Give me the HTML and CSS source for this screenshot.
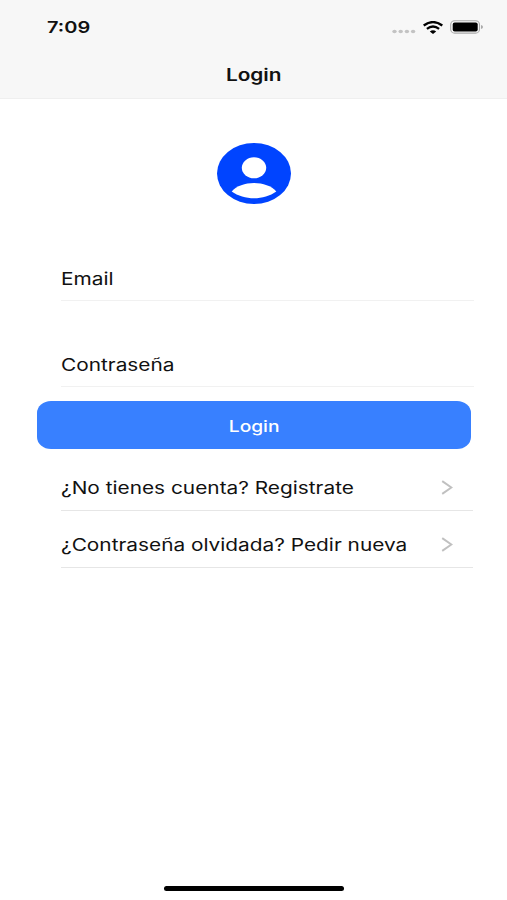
FILE: index.html
```
<!DOCTYPE html>
<html lang="es">
<head>
<meta charset="utf-8">
<title>Login</title>
<link rel="stylesheet" href="styles.css">
</head>
<body>
<header class="header">
  <div class="status">
    <span class="time"><span class="wide wide-time">7:09</span></span>
    <div class="indicators">
      <svg class="dots" width="24" height="5" viewBox="0 0 24 5" fill="#c3c3c3"><ellipse cx="2.5" cy="2.5" rx="2.2" ry="1.8"/><ellipse cx="8.7" cy="2.5" rx="2.2" ry="1.8"/><ellipse cx="14.9" cy="2.5" rx="2.2" ry="1.8"/><ellipse cx="21.1" cy="2.5" rx="2.2" ry="1.8"/></svg>
      <svg class="wifi" width="20" height="13" viewBox="0 0 20 13"><path d="M.7 4.5Q10-2.4 19.3 4.5M3.9 7.8Q10 3.2 16.1 7.8" fill="none" stroke="#000" stroke-width="2.3"/><path d="M6.8 10.4Q10 8 13.2 10.4L10 13Z"/></svg>
      <svg class="battery" width="33" height="14" viewBox="0 0 33 14"><rect x=".7" y=".7" width="28.8" height="12.4" rx="3.9" fill="none" stroke="#aaa" stroke-width="1.1"/><rect x="2.7" y="2.4" width="25" height="9" rx="2"/><path d="M31 5Q33 5.3 33 7T31 9Z" fill="#aaa"/></svg>
    </div>
  </div>
  <h1 class="title"><span class="wide wide-title">Login</span></h1>
</header>
<main class="main">
  <svg class="avatar" width="74" height="61" viewBox="0 0 74 61"><ellipse cx="37" cy="30.5" rx="37" ry="30.5" fill="#0044ff"/><ellipse cx="37" cy="24.8" rx="12.2" ry="10.5" fill="#fff"/><path d="M14.7 48.5C24 37 50 37 59.3 48.5C47 57.5 27 57.5 14.7 48.5Z" fill="#fff"/></svg>
  <form class="form">
    <div class="field"><label><span class="wide">Email</span></label></div>
    <div class="field field-password"><label><span class="wide">Contraseña</span></label></div>
    <button class="submit" type="button"><span class="wide wide-submit">Login</span></button>
  </form>
  <nav class="links">
    <a class="link"><span class="wide">¿No tienes cuenta? Registrate</span><svg width="12" height="15" viewBox="0 0 12 15"><path d="M1.2 1.2L10.4 7.5L1.2 13.8" fill="none" stroke="#c0c0c0" stroke-width="2"/></svg></a>
    <a class="link"><span class="wide">¿Contraseña olvidada? Pedir nueva</span><svg width="12" height="15" viewBox="0 0 12 15"><path d="M1.2 1.2L10.4 7.5L1.2 13.8" fill="none" stroke="#c0c0c0" stroke-width="2"/></svg></a>
  </nav>
</main>
<div class="home"></div>
</body>
</html>
```
FILE: styles.css
```
* { box-sizing: border-box; }
body {
  margin: 0;
  height: 900px;
  display: flex;
  flex-direction: column;
  background: #fff;
  color: #111;
  font: 400 17px/24px Inter, "Liberation Sans", sans-serif;
  overflow: hidden;
}
.header { height: 99px; background: #f7f7f7; border-bottom: 1px solid #efefef; }
.status {
  height: 54px;
  padding: 0 24px 0 47px;
  display: flex;
  justify-content: space-between;
  align-items: center;
}
.wide { display: inline-block; white-space: nowrap; transform-origin: left center; transform: scaleX(1.225); }
.wide-time { transform: scaleX(1.25); }
.time { font-size: 16px; font-weight: 600; }
.indicators { display: flex; align-items: center; }
.dots { margin: 9px 7px 0 0; }
.wifi { margin-right: 7px; }
.title { margin: 0; padding-top: 9px; text-align: center; font-size: 17px; line-height: 24px; font-weight: 600; }
.wide-title { transform-origin: center; }
.wide-submit { transform-origin: center; transform: scaleX(1.2); }
.main { display: flex; flex-direction: column; flex: 1; }
.avatar { margin: 44px 0 0 217px; display: block; }
.form { display: flex; flex-direction: column; margin-top: 50px; }
.field { height: 47px; margin: 0 33px 0 61px; padding-top: 13px; border-bottom: 1px solid #f1f1f1; }
.field-password { margin-top: 39px; }
.submit {
  height: 48px;
  margin: 14px 36px 0 37px;
  padding: 1px 0 0;
  border: 0;
  border-radius: 14px / 12px;
  background: #3880ff;
  color: #fff;
  font: 500 16px/24px Inter, "Liberation Sans", sans-serif;
}
.links { display: flex; flex-direction: column; margin: 5px 34px 0 61px; }
.link {
  height: 57px;
  padding: 10px 20px 0 0;
  display: flex;
  justify-content: space-between;
  align-items: center;
  border-bottom: 1px solid #e6e6e6;
}
.link .wide { padding-top: 1px; }
.home { width: 180px; height: 5px; margin: 0 auto 9px 164px; border-radius: 3px; background: #000; }
```
